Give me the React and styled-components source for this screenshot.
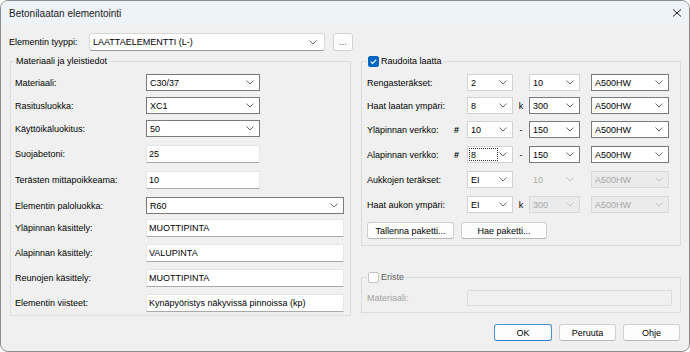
import React from "react"
import styled, { createGlobalStyle, css } from "styled-components"

const GlobalStyle = createGlobalStyle`
  html, body { margin: 0; padding: 0; background: #ffffff; }
  body {
    font-family: "Liberation Sans", Arial, sans-serif;
    font-size: 9px;
    color: #000;
  }
  * { box-sizing: border-box; }
`

const Window = styled.div`
  width: 690px;
  height: 352px;
  border: 1px solid #8c8c8c;
  border-radius: 8px;
  background: #f0f0f0;
  overflow: hidden;
  display: flex;
  flex-direction: column;
`

const TitleBar = styled.div`
  flex: none;
  height: 24px;
  display: flex;
  align-items: center;
  justify-content: space-between;
  padding: 0 7px 0 8px;
  background: #eef3f9;
  font-size: 10px;
  color: #1a1a1a;
`

const Body = styled.div`
  padding: 8px 9px 0 8px;
`

const TopRow = styled.div`
  display: flex;
  align-items: center;
  height: 18px;
`

const Label = styled.span`
  flex: none;
  width: ${(p) => (p.$w ? `${p.$w}px` : "auto")};
  color: ${(p) => (p.$disabled ? "#a3a3a3" : "#000")};
  white-space: nowrap;
`

const comboLooks = {
  win: css`
    background: #fff;
    border: 1px solid #d7d7d7;
    border-bottom-color: #9c9c9c;
    border-radius: 3px;
  `,
  dark: css`
    background: #fff;
    border: 1px solid #7a7a7a;
  `,
  light: css`
    background: #fff;
    border: 1px solid #d2d2d2;
  `,
  off: css`
    background: transparent;
    border: 1px solid transparent;
    color: #a8a8a8;
  `,
  offbox: css`
    background: #ebebeb;
    border: 1px solid #d9d9d9;
    color: #a8a8a8;
  `,
}

const ComboBox = styled.div`
  flex: none;
  width: ${(p) => p.$w}px;
  height: ${(p) => p.$h || 17}px;
  display: flex;
  align-items: center;
  justify-content: space-between;
  padding: 0 ${(p) => (p.$look === "win" ? 7 : 5)}px 0 3px;
  white-space: nowrap;
  ${(p) => comboLooks[p.$look || "dark"]}
`

const ComboValue = styled.span`
  ${(p) =>
    p.$focus &&
    css`
      margin-left: -2px;
      width: 29px;
      height: 13px;
      padding-left: 1px;
      border: 1px dotted #333;
      display: flex;
      align-items: center;
    `}
`

const Chevron = ({ faded }) => (
  <svg width="8" height="5" viewBox="0 0 8 5">
    <polyline
      points="0.5,0.5 4,4 7.5,0.5"
      fill="none"
      stroke={faded ? "#c4c4c4" : "#6b6b6b"}
      strokeWidth="1"
    />
  </svg>
)

const Combo = ({ value, w, h, look, focus }) => (
  <ComboBox $w={w} $h={h} $look={look}>
    <ComboValue $focus={focus}>{value}</ComboValue>
    <Chevron faded={look === "off" || look === "offbox"} />
  </ComboBox>
)

const TextField = styled.div`
  flex: none;
  width: ${(p) => p.$w}px;
  height: ${(p) => p.$h || 18}px;
  display: flex;
  align-items: center;
  padding-left: 2px;
  white-space: nowrap;
  background: ${(p) => (p.$disabled ? "#f0f0f0" : "#fff")};
  border: 1px solid ${(p) => (p.$disabled ? "#dcdcdc" : "#e6e6e6")};
  border-bottom-color: ${(p) => (p.$disabled ? "#dcdcdc" : "#a9a9a9")};
  border-radius: 1px;
`

const DotsButton = styled.div`
  margin-left: 8px;
  width: 20px;
  height: 18px;
  display: flex;
  align-items: flex-end;
  justify-content: center;
  padding-bottom: 3px;
  background: #fdfdfd;
  border: 1px solid #d3d3d3;
  border-radius: 3px;
  color: #4e4a66;
  font-size: 9px;
  line-height: 9px;
`

const Columns = styled.div`
  margin: 4px 0 0 1px;
  display: grid;
  grid-template-columns: 341px 320px;
  column-gap: 10px;
  align-items: start;
`

const RightColumn = styled.div`
  display: flex;
  flex-direction: column;
  gap: 25px;
`

const Group = styled.fieldset`
  margin: 0;
  min-width: 0;
  border: 1px solid #dcdcdc;
  padding: 0 ${(p) => p.$pr || 6}px ${(p) => p.$pb || 3}px ${(p) => p.$pl || 4}px;
`

const Legend = styled.legend`
  padding: 0 2px 0 1px;
  height: 12px;
  line-height: 12px;
  color: ${(p) => (p.$muted ? "#5f5f5f" : "#000")};
`

const LegendInner = styled.span`
  display: inline-flex;
  align-items: center;
  gap: 2px;
  height: 12px;
`

const CheckBox = styled.span`
  width: 11px;
  height: 11px;
  border-radius: 2px;
  display: inline-flex;
  align-items: center;
  justify-content: center;
  background: ${(p) => (p.$checked ? "#0067c0" : "#fdfdfd")};
  border: 1px solid ${(p) => (p.$checked ? "#0067c0" : "#c4c4c4")};
`

const Check = ({ checked }) => (
  <CheckBox $checked={checked}>
    {checked && (
      <svg width="9" height="9" viewBox="0 0 9 9">
        <polyline points="1.8,4.6 3.6,6.4 7.2,2.6" fill="none" stroke="#fff" strokeWidth="1.1" />
      </svg>
    )}
  </CheckBox>
)

const FormRow = styled.div`
  display: flex;
  align-items: center;
  margin-top: ${(p) => p.$top}px;
`

const RebarRow = styled.div`
  display: grid;
  grid-template-columns: 100px 46px 16px 51px 11px 78px;
  align-items: center;
  margin-top: ${(p) => p.$top}px;
`

const RebarLabel = styled.span`
  display: flex;
  justify-content: space-between;
  padding-right: 8px;
  white-space: nowrap;
`

const Mark = styled.span`
  text-align: center;
  font-weight: ${(p) => (p.$bold ? "bold" : "normal")};
`

const ButtonRow = styled.div`
  display: flex;
  gap: 7px;
  margin-top: ${(p) => p.$top || 0}px;
  justify-content: ${(p) => p.$justify || "flex-start"};
`

const PushButton = styled.button`
  width: ${(p) => p.$w}px;
  height: 17px;
  padding: 0;
  font: inherit;
  color: #000;
  background: #fdfdfd;
  border: 1px solid ${(p) => (p.$default ? "#4a90d9" : "#d0d0d0")};
  border-bottom-color: ${(p) => (p.$default ? "#2f7bd0" : "#b5b5b5")};
  border-radius: 3px;
`

const leftRows = [
  { label: "Materiaali:", kind: "combo", value: "C30/37", w: 114, top: 7 },
  { label: "Rasitusluokka:", kind: "combo", value: "XC1", w: 114, top: 6 },
  { label: "Käyttöikäluokitus:", kind: "combo", value: "50", w: 114, top: 6 },
  { label: "Suojabetoni:", kind: "text", value: "25", w: 114, top: 8 },
  { label: "Terästen mittapoikkeama:", kind: "text", value: "10", w: 114, top: 8 },
  { label: "Elementin paloluokka:", kind: "combo", value: "R60", w: 198, top: 8 },
  { label: "Yläpinnan käsittely:", kind: "text", value: "MUOTTIPINTA", w: 198, top: 5 },
  { label: "Alapinnan käsittely:", kind: "text", value: "VALUPINTA", w: 198, top: 7 },
  { label: "Reunojen käsittely:", kind: "text", value: "MUOTTIPINTA", w: 198, top: 7 },
  { label: "Elementin viisteet:", kind: "text", value: "Kynäpyöristys näkyvissä pinnoissa (kp)", w: 198, top: 7 },
]

const rebarRows = [
  { label: "Rengasteräkset:", a: "2", mark: "", b: "10", bLook: "light", c: "A500HW", cLook: "dark", top: 7 },
  { label: "Haat laatan ympäri:", a: "8", mark: "k", b: "300", bLook: "dark", c: "A500HW", cLook: "dark", top: 6 },
  { label: "Yläpinnan verkko:", hash: true, a: "10", mark: "-", b: "150", bLook: "dark", c: "A500HW", cLook: "dark", top: 7 },
  { label: "Alapinnan verkko:", hash: true, a: "8", focus: true, mark: "-", b: "150", bLook: "dark", c: "A500HW", cLook: "dark", top: 8 },
  { label: "Aukkojen teräkset:", a: "EI", mark: "", b: "10", bLook: "off", c: "A500HW", cLook: "offbox", top: 8 },
  { label: "Haat aukon ympäri:", a: "EI", mark: "k", b: "300", bLook: "offbox", c: "A500HW", cLook: "offbox", top: 8 },
]

const App = () => {
  return (
    <>
      <GlobalStyle />
      <Window>
        <TitleBar>
          <span>Betonilaatan elementointi</span>
          <svg width="10" height="10" viewBox="0 0 10 10">
            <path d="M1 1.5 L9 8.5 M9 1.5 L1 8.5" stroke="#222" strokeWidth="1" fill="none" />
          </svg>
        </TitleBar>
        <Body>
          <TopRow>
            <Label $w={80}>Elementin tyyppi:</Label>
            <Combo value="LAATTAELEMENTTI (L-)" w={236} h={18} look="win" />
            <DotsButton>...</DotsButton>
          </TopRow>

          <Columns>
            <Group>
              <Legend>Materiaali ja yleistiedot</Legend>
              {leftRows.map((r) => (
                <FormRow key={r.label} $top={r.top}>
                  <Label $w={131}>{r.label}</Label>
                  {r.kind === "combo" ? (
                    <Combo value={r.value} w={r.w} look="dark" />
                  ) : (
                    <TextField $w={r.w}>{r.value}</TextField>
                  )}
                </FormRow>
              ))}
            </Group>

            <RightColumn>
              <Group $pl={5} $pb={6}>
                <Legend>
                  <LegendInner>
                    <Check checked />
                    Raudoita laatta
                  </LegendInner>
                </Legend>
                {rebarRows.map((r) => (
                  <RebarRow key={r.label} $top={r.top}>
                    <RebarLabel>
                      <span>{r.label}</span>
                      {r.hash && <Mark $bold>#</Mark>}
                    </RebarLabel>
                    <Combo value={r.a} w={46} look="light" focus={r.focus} />
                    <Mark>{r.mark}</Mark>
                    <Combo value={r.b} w={51} look={r.bLook} />
                    <span />
                    <Combo value={r.c} w={78} look={r.cLook} />
                  </RebarRow>
                ))}
                <ButtonRow $top={9}>
                  <PushButton $w={87}>Tallenna paketti...</PushButton>
                  <PushButton $w={86}>Hae paketti...</PushButton>
                </ButtonRow>
              </Group>

              <Group $pl={5} $pb={6}>
                <Legend $muted>
                  <LegendInner>
                    <Check />
                    Eriste
                  </LegendInner>
                </Legend>
                <FormRow $top={7}>
                  <Label $w={100} $disabled>
                    Materiaali:
                  </Label>
                  <TextField $w={205} $h={16} $disabled />
                </FormRow>
              </Group>
            </RightColumn>
          </Columns>

          <ButtonRow $top={8} $justify="flex-end">
            <PushButton $w={58} $default>
              OK
            </PushButton>
            <PushButton $w={57}>Peruuta</PushButton>
            <PushButton $w={57}>Ohje</PushButton>
          </ButtonRow>
        </Body>
      </Window>
    </>
  )
}

export default App
